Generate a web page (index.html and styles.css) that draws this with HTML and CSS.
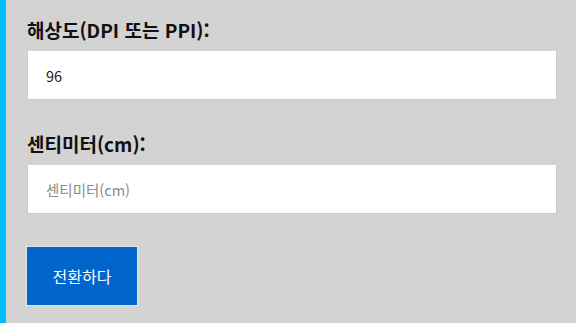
FILE: index.html
```html
<!DOCTYPE html>
<html lang="ko">
<head>
<meta charset="utf-8">
<link rel="stylesheet" href="styles.css">
</head>
<body>
<main class="panel">
  <form class="converter">
    <div class="field">
      <label class="label" for="dpi">해상도(DPI 또는 PPI):</label>
      <input class="input" id="dpi" type="text" value="96">
    </div>
    <div class="field">
      <label class="label" for="cm">센티미터(cm):</label>
      <input class="input" id="cm" type="text" placeholder="센티미터(cm)">
    </div>
    <button class="btn" type="button">전환하다</button>
  </form>
</main>
</body>
</html>
```

FILE: styles.css
```css
html, body {
  margin: 0;
  padding: 0;
  height: 100%;
  background: #d3d3d3;
}
body {
  font-family: "Noto Sans CJK KR", "Noto Sans", sans-serif;
}
.panel {
  box-sizing: border-box;
  min-height: 100%;
  border-left: 6px solid #00bfff;
  padding: 17px 19px 0 21px;
}
.converter {
  display: flex;
  flex-direction: column;
  align-items: flex-start;
}
.field {
  width: 100%;
  display: flex;
  flex-direction: column;
  margin-bottom: 31px;
}
.field + .field {
  margin-bottom: 33px;
}
.label {
  font-size: 19px;
  line-height: 26px;
  font-weight: 700;
  color: #111;
  margin-bottom: 7px;
}
.input {
  box-sizing: border-box;
  width: 100%;
  height: 50px;
  margin: 0;
  padding: 0 18px;
  border: 1px solid #cacaca;
  border-top-color: #d6d6d6;
  background: #fff;
  font-family: "Noto Sans CJK KR", "Noto Sans", sans-serif;
  font-size: 14.5px;
  color: #222;
  outline: none;
}
.input::placeholder {
  color: #8a8a8a;
}
.btn {
  box-sizing: border-box;
  width: 110px;
  height: 58px;
  margin: 0;
  border: none;
  box-shadow: 0 0 0 1px #e2e2e2;
  background: #0066cc;
  color: #fff;
  font-family: "Noto Sans CJK KR", "Noto Sans", sans-serif;
  font-size: 16px;
  cursor: pointer;
}
```
